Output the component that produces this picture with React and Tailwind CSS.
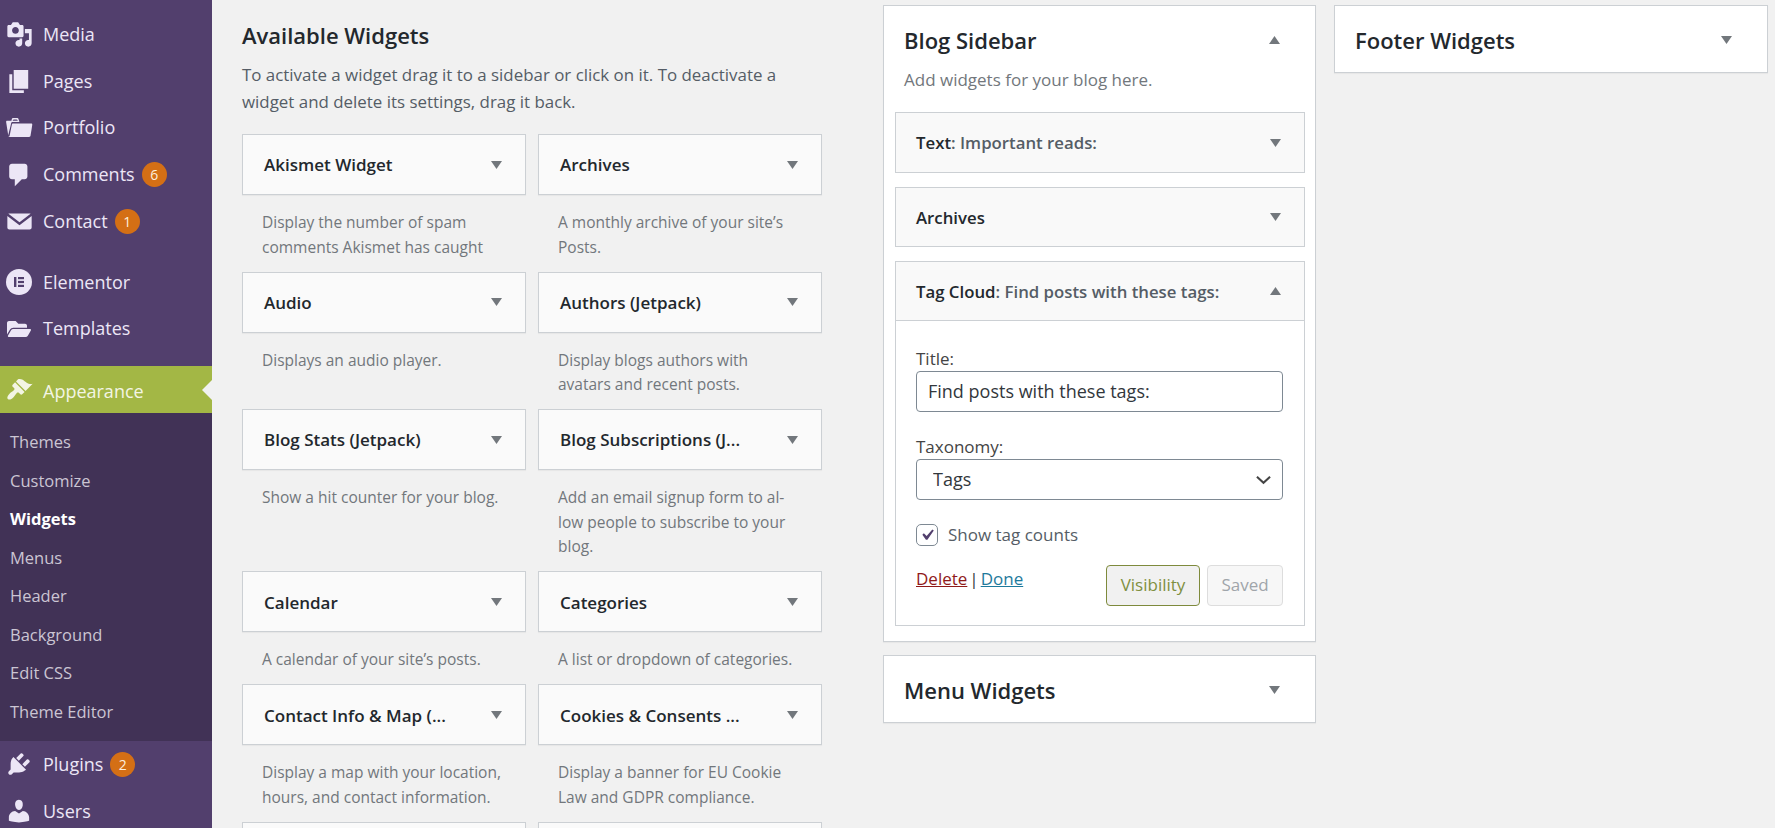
import { FaFolderOpen } from "react-icons/fa";

const FONT = "font-['Open_Sans','Noto_Sans',sans-serif]";

function Dash({ d, className = "w-[22px] h-[22px]" }) {
  return (
    <svg viewBox="0 0 20 20" className={className} fill="currentColor">
      <path d={d} />
    </svg>
  );
}

const icons = {
  media:
    "M13 11V4c0-.55-.45-1-1-1h-1.67L9 1H5L3.67 3H2c-.55 0-1 .45-1 1v7c0 .55.45 1 1 1h10c.55 0 1-.45 1-1zM7 4.5c1.38 0 2.5 1.12 2.5 2.5S8.38 9.5 7 9.5 4.5 8.38 4.5 7 5.62 4.5 7 4.5zM14 6h5v10.5c0 1.38-1.12 2.5-2.5 2.5S14 17.88 14 16.5s1.12-2.5 2.5-2.5c.17 0 .34.02.5.05V9h-3V6zm-4 8.05V13h2v3.5c0 1.38-1.12 2.5-2.5 2.5S7 17.88 7 16.5 8.12 14 9.5 14c.17 0 .34.02.5.05z",
  pages: "M6 15V2h10v13H6zm-1 1h8v2H3V5h2v11z",
  portfolio:
    "M4 5H.78c-.37 0-.74.32-.69.84l1.56 9.99S3.5 8.47 3.86 6.7c.11-.53.61-.7.98-.7H10s-.7-2.08-.77-2.31C9.11 3.25 8.89 3 8.45 3H5.14c-.36 0-.7.23-.8.64C4.25 4.04 4 5 4 5zm4.88 0h-4s.42-1 .87-1h2.13c.48 0 1 1 1 1zM2.67 16.25c-.31.47-.76.75-1.26.75h15.73c.54 0 .92-.31 1.03-.83.39-1.67 1.28-8.17 1.28-8.17.1-.5-.3-.92-.75-.92H5.21c-.37 0-.75.21-.86.74-.35 1.75-1.68 8.43-1.68 8.43z",
  comments:
    "M5 2h9c1.1 0 2 .9 2 2v7c0 1.1-.9 2-2 2h-2l-5 5v-5H5c-1.1 0-2-.9-2-2V4c0-1.1.9-2 2-2z",
  contact:
    "M2.5 4h15c.3 0 .5.1.7.3L10 10.6 1.8 4.3c.2-.2.4-.3.7-.3zM1 5.9l9 6.9 9-6.9v8.6c0 .8-.7 1.5-1.5 1.5h-15C1.7 16 1 15.3 1 14.5V5.9z",
  appearance:
    "M14.48 11.06L7.41 3.99l1.5-1.5c.5-.56 2.3-.47 3.51.32 1.21.8 1.43 1.28 2.91 2.1 1.18.64 2.45 1.26 4.45.85zm-.71.71L6.7 4.7 4.93 6.47c-.39.39-.39 1.02 0 1.41l1.06 1.06c.39.39.39 1.03 0 1.42-.6.6-1.43 1.11-2.21 1.69-.35.26-.7.53-1.01.84C1.43 14.23.4 16.08 1.4 17.07c.99 1 2.84-.03 4.18-1.36.31-.31.58-.66.85-1.02.57-.78 1.08-1.61 1.69-2.21.39-.39 1.02-.39 1.41 0l1.06 1.06c.39.39 1.02.39 1.41 0z",
  plugins:
    "M13.11 4.36L9.87 7.6 8 5.73l3.24-3.24c.35-.34 1.05-.2 1.56.32.52.51.66 1.21.31 1.55zm-8 1.77l.91-1.12 9.01 9.01-1.19.84c-.71.71-2.63 1.16-3.82 1.16H6.14L4.9 17.26c-.59.59-1.54.59-2.12 0-.59-.58-.59-1.53 0-2.12l1.24-1.24v-3.88c0-1.13.4-3.19 1.09-3.89zm7.26 3.97l3.24-3.24c.34-.35 1.04-.21 1.55.31.52.51.66 1.21.31 1.55l-3.24 3.25z",
  users:
    "M10 9.25c-2.27 0-2.73-3.44-2.73-3.44C7 4.02 7.82 2 9.97 2c2.16 0 2.98 2.02 2.71 3.81 0 0-.41 3.44-2.68 3.44zm0 2.57L12.72 10c2.39 0 4.52 2.33 4.52 4.53v2.49s-3.65 1.13-7.24 1.13c-3.65 0-7.24-1.13-7.24-1.13v-2.49c0-2.25 1.94-4.48 4.47-4.48z",
};

function ElementorIcon() {
  return (
    <svg viewBox="0 0 26 26" className="w-[26px] h-[26px]">
      <circle cx="13" cy="13" r="13" fill="currentColor" />
      <rect x="8" y="8" width="2.4" height="10" fill="#523f6d" />
      <rect x="12" y="8" width="6" height="2.2" fill="#523f6d" />
      <rect x="12" y="11.9" width="6" height="2.2" fill="#523f6d" />
      <rect x="12" y="15.8" width="6" height="2.2" fill="#523f6d" />
    </svg>
  );
}

function Triangle({ up = false }) {
  return (
    <svg viewBox="0 0 11 8" className={`w-[11px] h-[8px] shrink-0 text-[#72777c] ${up ? "rotate-180" : ""}`} fill="currentColor">
      <path d="M0 0h11L5.5 8z" />
    </svg>
  );
}

function MenuItem({ icon, label, badge, className = "", labelClass = "" }) {
  return (
    <div className={`flex items-center h-[46.75px] text-[#ece6f6] ${className}`}>
      <span className="w-[38px] flex justify-center shrink-0">{icon}</span>
      <span className={`ml-[5px] text-[18px] ${labelClass}`}>{label}</span>
      {badge && (
        <span className="ml-[7px] w-[25px] h-[25px] rounded-full bg-[#d46f15] text-[#fdeedd] text-[14px] flex items-center justify-center">
          {badge}
        </span>
      )}
    </div>
  );
}

function Sidebar() {
  const sub = ["Themes", "Customize", "Widgets", "Menus", "Header", "Background", "Edit CSS", "Theme Editor"];
  return (
    <aside className="w-[212px] shrink-0 h-full bg-[#523f6d] pt-[11px]">
      <MenuItem icon={<Dash d={icons.media} className="w-[27px] h-[27px]" />} label="Media" />
      <MenuItem icon={<Dash d={icons.pages} className="w-[29px] h-[29px]" />} label="Pages" />
      <MenuItem icon={<Dash d={icons.portfolio} className="w-[27px] h-[27px]" />} label="Portfolio" />
      <MenuItem icon={<Dash d={icons.comments} className="w-[28px] h-[28px]" />} label="Comments" badge="6" />
      <MenuItem icon={<Dash d={icons.contact} className="w-[27px] h-[27px]" />} label="Contact" badge="1" />
      <div className="h-[14px]" />
      <MenuItem icon={<ElementorIcon />} label="Elementor" />
      <MenuItem icon={<FaFolderOpen className="w-[24px] h-[24px]" />} label="Templates" />
      <div className="h-[14px]" />
      <div className="relative">
        <MenuItem
          icon={<Dash d={icons.appearance} className="w-[27px] h-[27px]" />}
          label="Appearance"
          className="bg-[#a3b745] text-[#f3f5e4]"
          labelClass="pt-[3px]"
        />
        <span className="absolute right-0 top-[14px] w-0 h-0 border-y-[10px] border-y-transparent border-r-[10px] border-r-[#f1f1f1]" />
      </div>
      <div className="bg-[#413256] pt-[10.5px] h-[328px]">
        {sub.map((s) => (
          <div
            key={s}
            className={`h-[38.5px] flex items-center pl-[10px] text-[16.5px] ${s === "Widgets" ? "text-white font-bold" : "text-[#cbc5d3]"}`}
          >
            {s}
          </div>
        ))}
      </div>
      <MenuItem icon={<Dash d={icons.plugins} className="w-[28px] h-[28px]" />} label="Plugins" badge="2" />
      <MenuItem icon={<Dash d={icons.users} className="w-[28px] h-[28px]" />} label="Users" />
    </aside>
  );
}

function WidgetCard({ title, lines }) {
  return (
    <div>
      <div className="h-[61px] border border-[#ccd0d4] bg-[#fafafa] flex items-center justify-between pl-[21px] pr-[23px] shadow-[0_1px_1px_rgba(0,0,0,0.04)]">
        <span className="text-[17px] font-semibold text-[#23282d] pt-[1px]">{title}</span>
        <Triangle />
      </div>
      <div className="pt-[15px] pb-[12.6px] px-[20px] text-[15.5px] leading-[24.5px] text-[#72777c]">
        {lines.map((l) => (
          <div key={l} className="whitespace-nowrap">{l}</div>
        ))}
      </div>
    </div>
  );
}

const widgets = [
  ["Akismet Widget", ["Display the number of spam", "comments Akismet has caught"]],
  ["Archives", ["A monthly archive of your site’s", "Posts."]],
  ["Audio", ["Displays an audio player."]],
  ["Authors (Jetpack)", ["Display blogs authors with", "avatars and recent posts."]],
  ["Blog Stats (Jetpack)", ["Show a hit counter for your blog."]],
  ["Blog Subscriptions (J...", ["Add an email signup form to al-", "low people to subscribe to your", "blog."]],
  ["Calendar", ["A calendar of your site’s posts."]],
  ["Categories", ["A list or dropdown of categories."]],
  ["Contact Info & Map (...", ["Display a map with your location,", "hours, and contact information."]],
  ["Cookies & Consents ...", ["Display a banner for EU Cookie", "Law and GDPR compliance."]],
  ["", []],
  ["", []],
];

function AvailableWidgets() {
  return (
    <section className="w-[580px] ml-[30px] mr-[61px] shrink-0 pt-[20px]">
      <h2 className="text-[22px] leading-[30px] font-semibold text-[#23282d]">Available Widgets</h2>
      <p className="mt-[11px] text-[16.9px] leading-[27px] text-[#555d66] whitespace-nowrap">
        To activate a widget drag it to a sidebar or click on it. To deactivate a
        <br />
        widget and delete its settings, drag it back.
      </p>
      <div className="grid grid-cols-2 gap-x-[12px] mt-[19px]">
        {widgets.map(([title, lines], i) => (
          <WidgetCard key={i} title={title} lines={lines} />
        ))}
      </div>
    </section>
  );
}

function InnerHeader({ name, detail, open, height = "h-[59px]" }) {
  return (
    <div className={`${height} bg-[#f9f9f9] flex items-center justify-between pl-[20px] pr-[23px] ${open ? "border-b border-[#ccd0d4]" : ""}`}>
      <span className="text-[16.8px] font-semibold text-[#23282d] pt-[1px]">
        {name}
        {detail && <span className="text-[#555d66]">: {detail}</span>}
      </span>
      <Triangle up={open} />
    </div>
  );
}

function SidebarHeader({ title, up }) {
  return (
    <div className="flex items-center justify-between pl-[20px] pr-[35px] pt-[2px] h-[66px]">
      <h3 className="text-[22px] font-semibold text-[#23282d]">{title}</h3>
      <Triangle up={up} />
    </div>
  );
}

function TagCloudForm() {
  return (
    <div className="bg-white pl-[20px] pr-[21px] pt-[25.5px] h-[304px]">
      <label className="block text-[17px] leading-[24px] text-[#444]">Title:</label>
      <input
        defaultValue="Find posts with these tags:"
        className="w-full h-[41px] px-[11px] border border-[#7e8993] rounded-[4px] bg-white text-[18px] text-[#32373c] outline-none"
      />
      <label className="block mt-[23px] text-[17px] leading-[24px] text-[#444]">Taxonomy:</label>
      <div className="relative">
        <select className="w-full h-[41px] pl-[16px] border border-[#7e8993] rounded-[4px] bg-white appearance-none text-[18px] text-[#32373c] outline-none">
          <option>Tags</option>
        </select>
        <svg viewBox="0 0 16 10" className="absolute right-[12px] top-[16px] w-[15px] h-[10px] text-[#444]" fill="none" stroke="currentColor" strokeWidth="2.2">
          <path d="M1 1.5l7 6.5 7-6.5" />
        </svg>
      </div>
      <label className="flex items-center mt-[24px] h-[22px]">
        <span className="relative w-[22px] h-[22px]">
          <input type="checkbox" defaultChecked className="appearance-none w-full h-full border border-[#7e8993] rounded-[5px] bg-white block" />
          <svg viewBox="0 0 20 20" className="absolute inset-0 m-auto w-[22px] h-[22px] text-[#523f6d]" fill="currentColor">
            <path d="M14.83 4.89l1.34.94-5.81 8.38H9.02L5.78 9.67l1.34-1.25 2.57 2.4z" />
          </svg>
        </span>
        <span className="ml-[10px] text-[17px] text-[#555d66]">Show tag counts</span>
      </label>
      <div className="flex items-start mt-[19px]">
        <div className="text-[17px] pt-[1px] text-[#32373c]">
          <a className="text-[#8f1a1a] underline">Delete</a>
          <span className="mx-[2px]">|</span>
          <a className="text-[#1e7a9c] underline">Done</a>
        </div>
        <button className="ml-auto w-[94px] h-[41px] border border-[#7e8a3c] rounded-[4px] bg-[#f1f1f1] text-[17px] text-[#7f8f3f]">Visibility</button>
        <button className="ml-[7px] w-[76px] h-[41px] border border-[#ddd] rounded-[4px] bg-[#f7f7f7] text-[17px] text-[#a0a5aa]">Saved</button>
      </div>
    </div>
  );
}

function BlogColumn() {
  return (
    <section className="w-[433px] shrink-0 pt-[5px]">
      <div className="border border-[#ccd0d4] bg-white h-[637px] shadow-[0_1px_1px_rgba(0,0,0,0.04)]">
        <SidebarHeader title="Blog Sidebar" up />
        <p className="pl-[20px] -mt-[4px] text-[17px] leading-[24px] text-[#72777c]">Add widgets for your blog here.</p>
        <div className="ml-[11px] mr-[10px] mt-[20px] flex flex-col gap-[14px]">
          <div className="border border-[#ccd0d4]">
            <InnerHeader name="Text" detail="Important reads:" />
          </div>
          <div className="border border-[#ccd0d4]">
            <InnerHeader name="Archives" height="h-[58px]" />
          </div>
          <div className="border border-[#ccd0d4]">
            <InnerHeader name="Tag Cloud" detail="Find posts with these tags:" open />
            <TagCloudForm />
          </div>
        </div>
      </div>
      <div className="mt-[13px] border border-[#ccd0d4] bg-white shadow-[0_1px_1px_rgba(0,0,0,0.04)]">
        <SidebarHeader title="Menu Widgets" />
      </div>
    </section>
  );
}

export default function App() {
  return (
    <div className={`flex w-full h-[828px] overflow-hidden bg-[#f1f1f1] ${FONT}`}>
      <Sidebar />
      <AvailableWidgets />
      <BlogColumn />
      <section className="w-[434px] shrink-0 ml-[18px] pt-[5px]">
        <div className="border border-[#ccd0d4] bg-white shadow-[0_1px_1px_rgba(0,0,0,0.04)]">
          <SidebarHeader title="Footer Widgets" />
        </div>
      </section>
    </div>
  );
}
